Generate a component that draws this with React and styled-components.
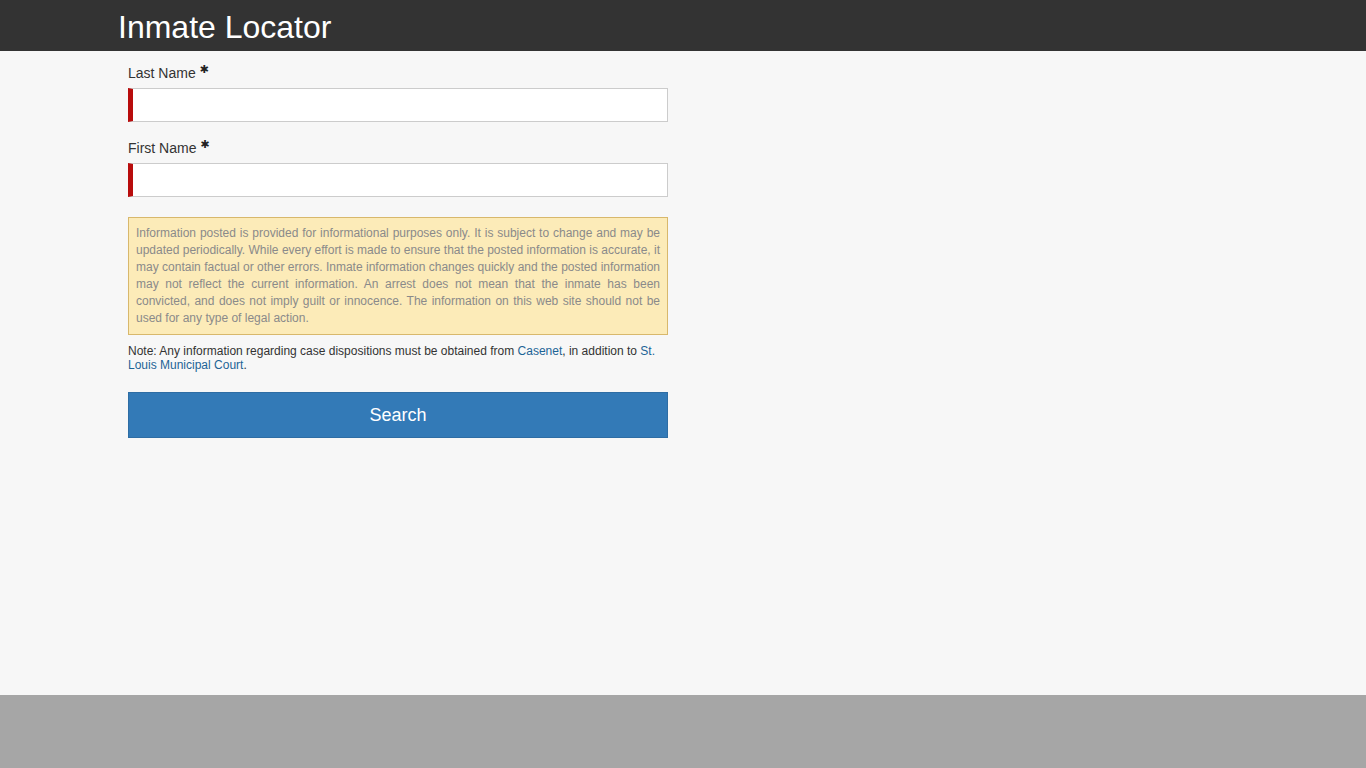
import styled, { createGlobalStyle } from 'styled-components';

const GlobalStyle = createGlobalStyle`
  html, body {
    margin: 0;
    padding: 0;
    background: #f7f7f7;
    font-family: "Liberation Sans", Arial, sans-serif;
    color: #333;
  }
  * {
    box-sizing: border-box;
  }
`;

function Field(props) {
  return (
    <FieldGroup>
      <Label htmlFor={props.id}>
        {props.label} <Required>✱</Required>
      </Label>
      <TextBox id={props.id} type="text" />
    </FieldGroup>
  );
}

function App() {
  return (
    <Page>
      <GlobalStyle />
      <Header>
        <Title>Inmate Locator</Title>
      </Header>
      <Main>
        <Form onSubmit={(e) => e.preventDefault()}>
          <Field id="lastName" label="Last Name" />
          <Field id="firstName" label="First Name" />
          <Disclaimer>
            Information posted is provided for informational purposes only. It is subject to change
            and may be updated periodically. While every effort is made to ensure that the posted
            information is accurate, it may contain factual or other errors. Inmate information
            changes quickly and the posted information may not reflect the current information. An
            arrest does not mean that the inmate has been convicted, and does not imply guilt or
            innocence. The information on this web site should not be used for any type of legal
            action.
          </Disclaimer>
          <Note>
            Note: Any information regarding case dispositions must be obtained from{' '}
            <NoteLink href="#">Casenet</NoteLink>, in addition to{' '}
            <NoteLink href="#">St. Louis Municipal Court</NoteLink>.
          </Note>
          <SearchButton type="submit">Search</SearchButton>
        </Form>
      </Main>
      <Footer />
    </Page>
  );
}

export default App;

const Page = styled.div`
  display: flex;
  flex-direction: column;
  min-height: 768px;
`;
const Header = styled.header`
  height: 51px;
  background: #333333;
  padding: 3px 0 0 118px;
  display: flex;
  align-items: center;
`;
const Title = styled.h1`
  margin: 0;
  font-size: 32px;
  font-weight: normal;
  color: #fff;
  line-height: 1;
`;
const Main = styled.main`
  height: 644px;
  background: #f7f7f7;
  padding: 12px 0 0 128px;
`;
const Form = styled.form`
  width: 540px;
  display: flex;
  flex-direction: column;
`;
const FieldGroup = styled.div`
  display: flex;
  flex-direction: column;
  margin-bottom: 16px;
`;
const Label = styled.label`
  font-size: 14px;
  line-height: 20px;
  color: #333;
  margin-bottom: 5px;
`;
const Required = styled.span`
  font-family: "DejaVu Sans", sans-serif;
  font-size: 11px;
  line-height: 0;
  vertical-align: 5px;
  color: #222;
`;
const TextBox = styled.input`
  height: 34px;
  width: 100%;
  border: 1px solid #cccccc;
  border-left: 5px solid #b80c0c;
  background: #fff;
  font-size: 14px;
  padding: 6px 10px;
  outline: none;
`;
const Disclaimer = styled.div`
  margin-top: 4px;
  background: #fcebb8;
  border: 1px solid #d8b86c;
  padding: 7px 7px;
  font-size: 12px;
  line-height: 17px;
  color: #8a8a8a;
  text-align: justify;
`;
const Note = styled.p`
  margin: 9px 0 0;
  font-size: 12px;
  line-height: 14px;
  color: #333;
`;
const NoteLink = styled.a`
  color: #1d6496;
  text-decoration: none;
`;
const SearchButton = styled.button`
  margin-top: 20px;
  height: 46px;
  width: 100%;
  background: #337ab7;
  border: 1px solid #2e6da4;
  color: #fff;
  font-family: "Liberation Sans", Arial, sans-serif;
  font-size: 18px;
  cursor: pointer;
`;
const Footer = styled.footer`
  height: 73px;
  background: #a6a6a6;
`;
